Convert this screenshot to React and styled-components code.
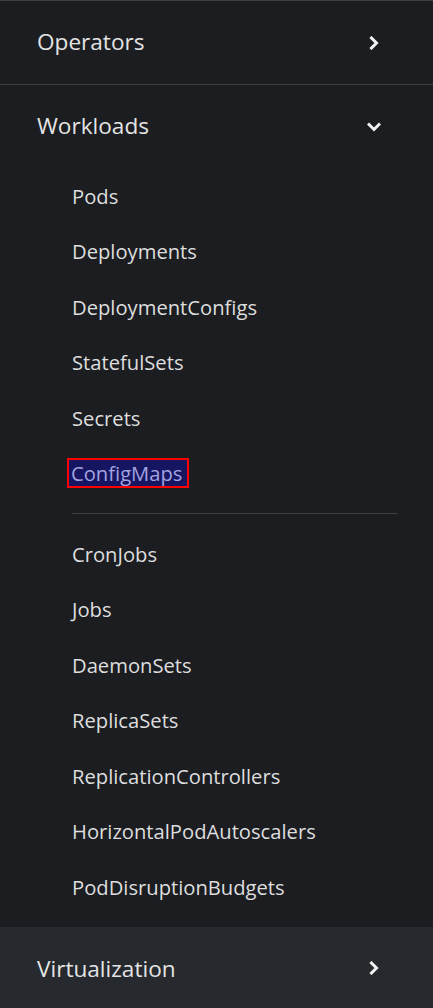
import styled, { createGlobalStyle } from 'styled-components'

const GlobalStyle = createGlobalStyle`
  body {
    margin: 0;
    background: #1b1d21;
    font-family: "Open Sans", "Liberation Sans", sans-serif;
  }
`

const Nav = styled.nav`
  width: 433px;
  background: #1b1d21;
  border-top: 1px solid #3c3f42;
`

const Section = styled.section`
  border-bottom: ${(p) => (p.$last ? 'none' : '1px solid #3c3f42')};
  background: ${(p) => (p.$hover ? '#26292d' : 'transparent')};
`

const Header = styled.div`
  height: 83px;
  display: flex;
  align-items: center;
  justify-content: space-between;
  padding: 0 52px 0 37px;
  color: #e4e4e4;
  font-size: 22.6px;
`

const Label = styled.span`
  margin-top: ${(p) => (p.$flat ? '0' : '-3px')};
`

const List = styled.ul`
  list-style: none;
  margin: 0;
  padding: 0 35px 12px 72px;
`

const Item = styled.li`
  height: 55.5px;
  display: flex;
  align-items: center;
  font-size: 20.2px;
  color: #dedede;
`

const Selected = styled.span`
  background: #151561;
  color: #a3a3e0;
  outline: 2px solid #ff0000;
  margin-left: -3px;
  padding: 0 5px 0 2px;
  line-height: 26px;
`

const Divider = styled.li`
  height: 1px;
  background: #3c3f42;
  margin: 12px 0;
`

const Chevron = ({ down }) => (
  <svg width="14" height="14" viewBox="0 0 14 14">
    {down ? (
      <path d="M2 4.5 L7 9.5 L12 4.5" fill="none" stroke="#f2f2f2" strokeWidth="3" strokeLinecap="square" />
    ) : (
      <path d="M4.5 2 L9.5 7 L4.5 12" fill="none" stroke="#f2f2f2" strokeWidth="3" strokeLinecap="square" />
    )}
  </svg>
)

const groupA = ['Pods', 'Deployments', 'DeploymentConfigs', 'StatefulSets', 'Secrets']
const groupB = [
  'CronJobs',
  'Jobs',
  'DaemonSets',
  'ReplicaSets',
  'ReplicationControllers',
  'HorizontalPodAutoscalers',
  'PodDisruptionBudgets',
]

export default function App() {
  return (
    <>
      <GlobalStyle />
      <Nav>
        <Section>
          <Header>
            <Label>Operators</Label>
            <Chevron />
          </Header>
        </Section>
        <Section $last>
          <Header>
            <Label>Workloads</Label>
            <Chevron down />
          </Header>
          <List>
            {groupA.map((n) => (
              <Item key={n}>{n}</Item>
            ))}
            <Item>
              <Selected>ConfigMaps</Selected>
            </Item>
            <Divider />
            {groupB.map((n) => (
              <Item key={n}>{n}</Item>
            ))}
          </List>
        </Section>
        <Section $hover $last>
          <Header>
            <Label $flat>Virtualization</Label>
            <Chevron />
          </Header>
        </Section>
      </Nav>
    </>
  )
}
